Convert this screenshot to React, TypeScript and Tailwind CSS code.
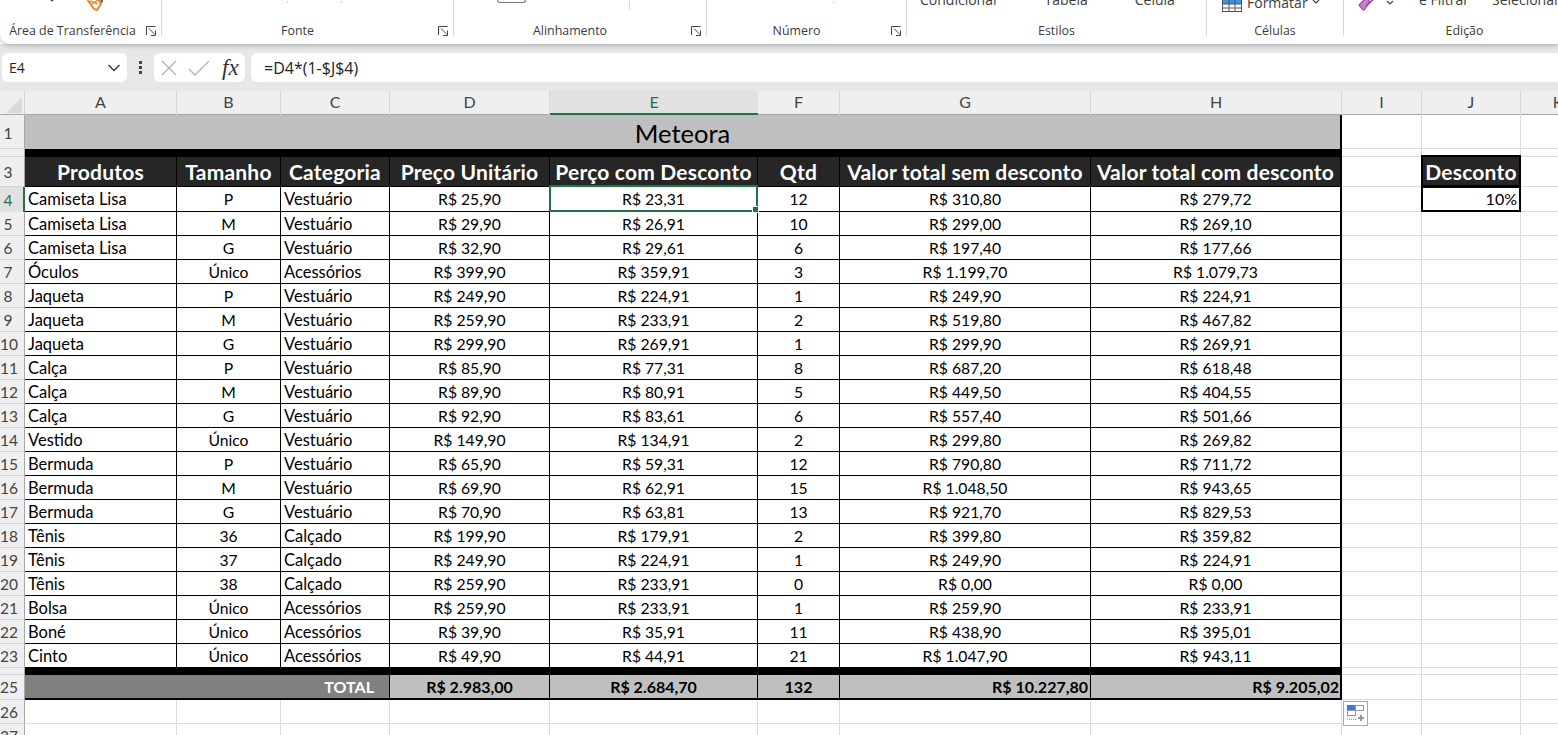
import React from "react";

const cols = "grid grid-cols-[25px_152px_104px_109px_160px_208px_82px_251px_251px_80px_99px_74px]";

const data: string[][] = [
  ["Camiseta Lisa", "P", "Vestuário", "R$ 25,90", "R$ 23,31", "12", "R$ 310,80", "R$ 279,72"],
  ["Camiseta Lisa", "M", "Vestuário", "R$ 29,90", "R$ 26,91", "10", "R$ 299,00", "R$ 269,10"],
  ["Camiseta Lisa", "G", "Vestuário", "R$ 32,90", "R$ 29,61", "6", "R$ 197,40", "R$ 177,66"],
  ["Óculos", "Único", "Acessórios", "R$ 399,90", "R$ 359,91", "3", "R$ 1.199,70", "R$ 1.079,73"],
  ["Jaqueta", "P", "Vestuário", "R$ 249,90", "R$ 224,91", "1", "R$ 249,90", "R$ 224,91"],
  ["Jaqueta", "M", "Vestuário", "R$ 259,90", "R$ 233,91", "2", "R$ 519,80", "R$ 467,82"],
  ["Jaqueta", "G", "Vestuário", "R$ 299,90", "R$ 269,91", "1", "R$ 299,90", "R$ 269,91"],
  ["Calça", "P", "Vestuário", "R$ 85,90", "R$ 77,31", "8", "R$ 687,20", "R$ 618,48"],
  ["Calça", "M", "Vestuário", "R$ 89,90", "R$ 80,91", "5", "R$ 449,50", "R$ 404,55"],
  ["Calça", "G", "Vestuário", "R$ 92,90", "R$ 83,61", "6", "R$ 557,40", "R$ 501,66"],
  ["Vestido", "Único", "Vestuário", "R$ 149,90", "R$ 134,91", "2", "R$ 299,80", "R$ 269,82"],
  ["Bermuda", "P", "Vestuário", "R$ 65,90", "R$ 59,31", "12", "R$ 790,80", "R$ 711,72"],
  ["Bermuda", "M", "Vestuário", "R$ 69,90", "R$ 62,91", "15", "R$ 1.048,50", "R$ 943,65"],
  ["Bermuda", "G", "Vestuário", "R$ 70,90", "R$ 63,81", "13", "R$ 921,70", "R$ 829,53"],
  ["Tênis", "36", "Calçado", "R$ 199,90", "R$ 179,91", "2", "R$ 399,80", "R$ 359,82"],
  ["Tênis", "37", "Calçado", "R$ 249,90", "R$ 224,91", "1", "R$ 249,90", "R$ 224,91"],
  ["Tênis", "38", "Calçado", "R$ 259,90", "R$ 233,91", "0", "R$ 0,00", "R$ 0,00"],
  ["Bolsa", "Único", "Acessórios", "R$ 259,90", "R$ 233,91", "1", "R$ 259,90", "R$ 233,91"],
  ["Boné", "Único", "Acessórios", "R$ 39,90", "R$ 35,91", "11", "R$ 438,90", "R$ 395,01"],
  ["Cinto", "Único", "Acessórios", "R$ 49,90", "R$ 44,91", "21", "R$ 1.047,90", "R$ 943,11"],
];

const headers = ["Produtos", "Tamanho", "Categoria", "Preço Unitário", "Perço com Desconto", "Qtd", "Valor total sem desconto", "Valor total com desconto"];
const letters = ["A", "B", "C", "D", "E", "F", "G", "H", "I", "J"];

function Launcher() {
  return (
    <svg width="11" height="10" viewBox="0 0 11 10" fill="none" stroke="#444" strokeWidth="1" className="shrink-0">
      <path d="M9.5 .5H.5V9" />
      <path d="M3 2.5L9 8.5M9.5 4.5V9.5H5" />
    </svg>
  );
}

function Tick() {
  return <span className="inline-block w-[3px] h-[1px] bg-[#777] ml-[9px] align-[5px]" />;
}

function Group({ w, label, launcher, lp, children }: { w: string; label: string; launcher?: boolean; lp?: string; children?: React.ReactNode }) {
  return (
    <div className={`${w} h-[36px] shrink-0 border-r border-[#d6d6d6] flex flex-col justify-end`}>
      <div className="flex items-end">{children}</div>
      <div className="h-[16px] mt-[12px] -mb-[3px] flex items-center">
        <div className={`flex-1 text-center text-[12.4px] leading-[16px] text-[#3c3c3c] whitespace-nowrap ${launcher ? "pr-[5px]" : ""} ${lp ?? ""}`}>{label}</div>
        {launcher ? (
          <div className="w-[15px] flex justify-start">
            <Launcher />
          </div>
        ) : null}
      </div>
    </div>
  );
}

function Ribbon() {
  return (
    <div className="h-[44px] shrink-0 bg-white rounded-bl-[10px] shadow-[0_2px_4px_rgba(0,0,0,0.22)] flex relative z-20 font-['Open_Sans',sans-serif]">
      <Group w="w-[162px]" label="Área de Transferência" launcher lp="pl-[4px]">
        <div className="h-[10px] w-full flex items-end">
          <svg width="8" height="4" viewBox="0 0 8 4" className="ml-[48px] mb-[9px]" fill="none" stroke="#444" strokeWidth="1.2">
            <path d="M1 0L4 3L7 0" />
          </svg>
          <svg width="18" height="12" viewBox="0 0 18 12" className="ml-[30px]">
            <path d="M1 0L8 10L11 11L15 5L12 0Z" fill="#fff" stroke="#e8872c" strokeWidth="2" />
            <path d="M4 2L12 5M6 5L12 1" stroke="#e8872c" strokeWidth="1.4" />
            <path d="M14 0H17V3L15 4Z" fill="#666" />
          </svg>
        </div>
      </Group>
      <Group w="w-[292px]" label="Fonte" launcher>
        <div className="h-[10px] w-full flex items-start">
          <div className="ml-[125px] w-px h-[2px] bg-[#d6d6d6]" />
          <div className="ml-[53px] w-px h-[2px] bg-[#d6d6d6]" />
        </div>
      </Group>
      <Group w="w-[253px]" label="Alinhamento" launcher>
        <div className="h-[10px] w-full flex items-start">
          <div className="ml-[43px] -mt-[1px] w-[29px] h-[3px] border border-t-0 border-[#777] rounded-b-[3px]" />
          <div className="ml-[103px] w-px h-[9px] bg-[#d6d6d6]" />
        </div>
      </Group>
      <Group w="w-[200px]" label="Número" launcher>
        <div className="h-[10px] w-full flex items-start">
          <div className="ml-[126px] w-px h-[2px] bg-[#d6d6d6]" />
        </div>
      </Group>
      <Group w="w-[300px]" label="Estilos">
        <div className="h-[10px] w-full text-[14px] leading-[18px] text-[#3c3c3c] flex items-end whitespace-nowrap">
          <span className="ml-[13px] mb-[2px]">
            Condicional
            <Tick />
          </span>
          <span className="ml-[36px] mb-[2px]">
            Tabela
            <Tick />
          </span>
          <span className="ml-[35px] mb-[2px]">
            Célula
            <Tick />
          </span>
        </div>
      </Group>
      <Group w="w-[137px]" label="Células">
        <div className="h-[10px] w-full flex items-end text-[14px] leading-[18px] text-[#3c3c3c] whitespace-nowrap">
          <svg width="20" height="15" viewBox="0 0 20 15" className="ml-[15px] -mb-[1px] shrink-0">
            <rect x=".5" y=".5" width="19" height="14" fill="#fff" stroke="#555" />
            <rect x="1" y="1" width="18" height="6" fill="#3f8fe8" />
            <path d="M7 0V15M13 0V15M0 7H20M0 11H20" stroke="#555" strokeWidth="1" />
          </svg>
          <span className="ml-[5px] -mb-[1px]">Formatar</span>
          <svg width="8" height="5" viewBox="0 0 8 5" className="ml-[4px] mb-[7px] shrink-0" fill="none" stroke="#444" strokeWidth="1.2">
            <path d="M1 1L4 4L7 1" />
          </svg>
        </div>
      </Group>
      <Group w="w-[242px]" label="Edição">
        <div className="h-[10px] w-full flex items-end text-[14px] leading-[18px] text-[#3c3c3c] whitespace-nowrap">
          <svg width="22" height="15" viewBox="0 0 22 15" className="ml-[14px] -mb-[1px] shrink-0">
            <path d="M1 8L8 1L12 5L6 13L5 13Z" fill="#c77fd0" stroke="#9a3fa8" strokeWidth="1.2" />
            <path d="M8 9L20 -2" stroke="#9a3fa8" strokeWidth="1.6" />
          </svg>
          <svg width="8" height="5" viewBox="0 0 8 5" className="ml-[6px] mb-[6px] shrink-0" fill="none" stroke="#444" strokeWidth="1.2">
            <path d="M1 1L4 4L7 1" />
          </svg>
          <span className="ml-[25px] mb-[2px]">
            e Filtrar
            <Tick />
          </span>
          <span className="ml-[11px] mb-[2px]">Selecionar</span>
        </div>
      </Group>
    </div>
  );
}

function FormulaBar() {
  return (
    <div className="h-[47px] shrink-0 bg-[#e6e7e9] flex items-start pt-[9px] pl-[2px] gap-[6px] font-['Open_Sans',sans-serif] text-[#222]">
      <div className="w-[125px] h-[29px] bg-white rounded-[6px] flex items-center justify-between pl-[7px] pr-[6px] text-[14px]">
        <span>E4</span>
        <svg width="14" height="8" viewBox="0 0 14 8" fill="none" stroke="#333" strokeWidth="1.3">
          <path d="M1.5 1L7 6.5L12.5 1" />
        </svg>
      </div>
      <div className="w-[15px] h-[29px] flex flex-col items-center justify-center gap-[2px]">
        <div className="w-[3px] h-[3px] bg-[#444]" />
        <div className="w-[3px] h-[3px] bg-[#444]" />
        <div className="w-[3px] h-[3px] bg-[#444]" />
      </div>
      <div className="w-[91px] h-[29px] bg-white rounded-[6px] flex items-center pl-[7px]">
        <svg width="16" height="16" viewBox="0 0 16 16" fill="none" stroke="#b5b5b5" strokeWidth="1.4">
          <path d="M1 1L15 15M15 1L1 15" />
        </svg>
        <svg width="22" height="16" viewBox="0 0 22 16" fill="none" stroke="#b5b5b5" strokeWidth="1.4" className="ml-[11px]">
          <path d="M1 9L7 15L21 1" />
        </svg>
        <span className="ml-[12px] font-['Liberation_Serif',serif] italic text-[23px] leading-[20px] text-[#333]">fx</span>
      </div>
      <div className="flex-1 h-[29px] bg-white rounded-l-[6px] flex items-center pl-[13px] text-[16px]">=D4*(1-$J$4)</div>
    </div>
  );
}

function ColumnHeader() {
  return (
    <div className={`${cols} h-[24px] shrink-0 bg-[#efefef] border-b border-[#a8a8a8] font-['Lato',sans-serif] text-[16px] leading-[22px] text-[#444]`}>
      <div className="border-r border-[#d2d2d2] flex items-end justify-end pr-[2px] pb-[2px]">
        <div className="w-0 h-0 border-l-[16px] border-l-transparent border-b-[16px] border-b-[#d9d9d9]" />
      </div>
      {letters.map((l) =>
        l === "E" ? (
          <div key={l} className="bg-[#e1e1e1] border-b-2 border-[#217346] text-[#217346] text-center h-[24px]">
            {l}
          </div>
        ) : (
          <div key={l} className="border-r border-[#d8d8d8] text-center">
            {l}
          </div>
        ),
      )}
      <div className="text-center">K</div>
    </div>
  );
}

function Row({ n, h, active, numPt, children }: { n?: string; h: string; active?: boolean; numPt?: string; children: React.ReactNode }) {
  return (
    <div className={`${cols} ${h} shrink-0`}>
      <div
        className={
          active
            ? "bg-[#e1e1e1] border-r-2 border-[#217346] text-[#217346] flex items-center font-['Lato',sans-serif] text-[15.5px]"
            : `bg-[#efefef] border-r border-b border-[#d2d2d2] border-r-[#a8a8a8] text-[#444] flex items-center font-['Lato',sans-serif] text-[15.5px] ${numPt ?? "pt-[1px]"}`
        }
      >
        <span className="w-[16px] text-center">{n}</span>
      </div>
      {children}
    </div>
  );
}

const blank = "border-r border-b border-[#dcdcdc] bg-white";
const cell = "border-r border-b border-black bg-white flex items-center text-black whitespace-nowrap";
const total = "bg-[#bfbfbf] border-r border-b-2 border-black font-bold text-black flex items-center";

function Blanks({ count = 3 }: { count?: number }) {
  return (
    <>
      {Array.from({ length: count }).map((_, i) => (
        <div key={i} className={blank} />
      ))}
    </>
  );
}

function DataRow({ row, n }: { row: string[]; n: number }) {
  const active = n === 4;
  return (
    <Row n={String(n)} h={active ? "h-[25px]" : "h-[24px]"} active={active}>
      {row.map((t, i) => {
        const left = i === 0 || i === 2;
        const lastCol = i === 7;
        return (
          <div
            key={i}
            className={`${cell} ${left ? "pl-[3px] text-[16.5px]" : "justify-center text-[15.7px]"} ${lastCol ? "border-r-2" : ""} ${active ? "" : "pt-[1px]"} ${active && i === 4 ? "relative" : ""}`}
          >
            {t}
            {active && i === 4 ? (
              <div className="absolute -left-px -top-[2px] -right-px -bottom-px border-2 border-[#217346] z-10">
                <div className="absolute -right-[3px] -bottom-[3px] w-[5px] h-[5px] bg-[#217346] border border-white box-content" />
              </div>
            ) : null}
          </div>
        );
      })}
      <div className={blank} />
      {active ? (
        <div className="-ml-px -mt-px border-2 border-black bg-white flex items-center justify-end pr-[2px] text-black relative z-10">10%</div>
      ) : (
        <div className={blank} />
      )}
      <div className={blank} />
    </Row>
  );
}

export default function App() {
  return (
    <div className="w-[1558px] h-[735px] overflow-hidden bg-white flex flex-col font-['Lato',sans-serif] text-[16px] leading-[20px]">
      <Ribbon />
      <FormulaBar />
      <ColumnHeader />
      <Row n="1" h="h-[34px]" numPt="pt-[3px]">
        <div className="col-span-8 bg-[#bfbfbf] border-r-2 border-black flex items-center justify-center text-[25.5px] leading-[30px] pt-[1px] text-black">Meteora</div>
        <Blanks />
      </Row>
      <Row h="h-[8px]">
        <div className="col-span-8 bg-black" />
        <Blanks />
      </Row>
      <Row n="3" h="h-[30px]">
        {headers.map((t, i) => (
          <div
            key={t}
            className={`bg-[#262626] border-b border-black ${i === 7 ? "border-r-2" : "border-r"} border-black text-white font-bold text-[21px] leading-[24px] flex items-center justify-center whitespace-nowrap tracking-[0.2px]`}
          >
            {t}
          </div>
        ))}
        <div className={blank} />
        <div className="-ml-px -mt-[2px] bg-[#262626] border-2 border-black text-white font-bold text-[21px] leading-[24px] pt-[1px] flex items-center justify-center tracking-[0.2px] relative z-10">Desconto</div>
        <div className={blank} />
      </Row>
      {data.map((r, i) => (
        <DataRow key={i} row={r} n={i + 4} />
      ))}
      <Row h="h-[7px]">
        <div className="col-span-8 bg-black" />
        <Blanks />
      </Row>
      <Row n="25" h="h-[25px]" numPt="pt-0">
        <div className="col-span-3 bg-[#808080] border-r border-b-2 border-black text-white font-bold flex items-center justify-end pr-[15px]">TOTAL</div>
        <div className={`${total} justify-center`}>R$ 2.983,00</div>
        <div className={`${total} justify-center`}>R$ 2.684,70</div>
        <div className={`${total} justify-center`}>132</div>
        <div className={`${total} justify-end pr-[2px]`}>R$ 10.227,80</div>
        <div className="bg-[#bfbfbf] border-r-2 border-b-2 border-black font-bold text-black flex items-center justify-end pr-[1px]">R$ 9.205,02</div>
        <Blanks />
      </Row>
      <Row n="26" h="h-[24px]">
        {Array.from({ length: 8 }).map((_, i) => (
          <div key={i} className={blank} />
        ))}
        <div className={`${blank} relative`}>
          <div className="absolute left-[1px] top-[1px] w-[25px] h-[25px] bg-white border border-[#a8a8a8] z-10">
            <svg width="23" height="23" viewBox="0 0 23 23" fill="none">
              <rect x="3.5" y="3.5" width="8" height="5" fill="#3a78f2" stroke="#3a78f2" />
              <rect x="11.5" y="3.5" width="8" height="5" stroke="#999" />
              <rect x="3.5" y="8.5" width="8" height="5" stroke="#999" />
              <path d="M3.5 15V17.5H12V15" stroke="#999" strokeDasharray="1 1" />
              <path d="M14 16H20M17 13V19" stroke="#999" strokeWidth="2" />
            </svg>
          </div>
        </div>
        <Blanks count={2} />
      </Row>
      <Row n="27" h="h-[24px]">
        {Array.from({ length: 11 }).map((_, i) => (
          <div key={i} className={blank} />
        ))}
      </Row>
    </div>
  );
}
